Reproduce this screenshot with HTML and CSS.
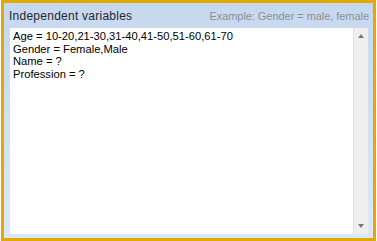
FILE: index.html
```html
<!DOCTYPE html>
<html>
<head>
<meta charset="utf-8">
<link rel="stylesheet" href="styles.css">
</head>
<body>
<div class="panel">
  <div class="header">
    <span class="title">Independent variables</span>
    <span class="example">Example: Gender = male, female</span>
  </div>
  <div class="body">
    <div class="text">
      <div>Age = 10-20,21-30,31-40,41-50,51-60,61-70</div>
      <div>Gender = Female,Male</div>
      <div>Name = ?</div>
      <div>Profession = ?</div>
    </div>
    <div class="scrollbar">
      <span class="arrow up"></span>
      <span class="arrow down"></span>
    </div>
  </div>
</div>
</body>
</html>
```
FILE: styles.css
```css
html, body {
  margin: 0;
  padding: 0;
  background: #ffffff;
}
.panel {
  margin-left: 1px;
  width: 375px;
  height: 241px;
  box-sizing: border-box;
  border: 3px solid #e2a900;
  background: linear-gradient(#c6d8ef, #dce8f6);
  display: flex;
  flex-direction: column;
  font-family: "Liberation Sans", Arial, sans-serif;
  font-size: 11px;
}
.header {
  height: 25px;
  display: flex;
  align-items: center;
  justify-content: space-between;
  padding: 0 4px 0 5px;
}
.title {
  color: #1e2733;
  font-size: 12px;
  letter-spacing: 0.25px;
}
.example {
  color: #8b9097;
  font-size: 11px;
  letter-spacing: -0.05px;
}
.body {
  flex: 1;
  margin: 0 5px 4px 6px;
  background: #ffffff;
  display: flex;
}
.text {
  flex: 1;
  padding: 2px 3px;
  line-height: 12.7px;
  color: #000000;
  font-size: 11.2px;
}
.scrollbar {
  width: 14px;
  background: #efefef;
  border-left: 1px solid #e0e0e0;
  display: flex;
  flex-direction: column;
  justify-content: space-between;
  align-items: center;
  padding: 6px 0;
}
.arrow {
  width: 0;
  height: 0;
  border-left: 3.5px solid transparent;
  border-right: 3.5px solid transparent;
}
.arrow.up {
  border-bottom: 4px solid #7a7a7a;
}
.arrow.down {
  border-top: 4px solid #7a7a7a;
}
```
